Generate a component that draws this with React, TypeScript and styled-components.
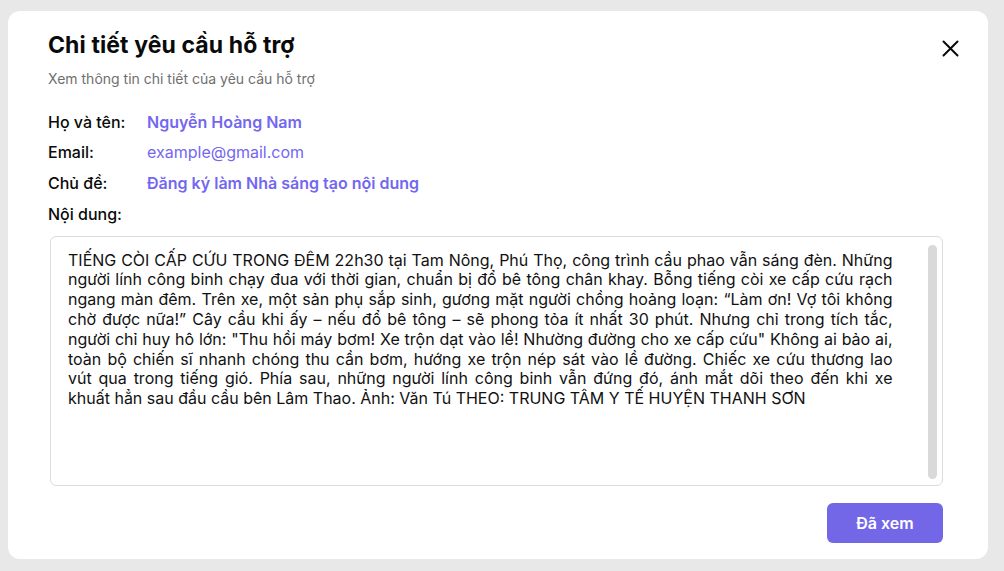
import React from "react";
import styled, { createGlobalStyle } from "styled-components";

const GlobalStyle = createGlobalStyle`
  html, body { margin: 0; padding: 0; }
  body {
    background: #e8e8e8;
    font-family: Inter, "Noto Sans", "Liberation Sans", sans-serif;
    color: #111111;
  }
  * { box-sizing: border-box; }
`;

const Page = styled.div`
  width: 1004px;
  height: 571px;
  padding: 11px 16px 12px 8px;
  display: flex;
`;

const Modal = styled.div`
  flex: 1;
  background: #ffffff;
  border-radius: 12px;
  padding: 18px 45px 16px 40px;
  display: flex;
  flex-direction: column;
`;

const Header = styled.div`
  display: flex;
  align-items: flex-start;
  justify-content: space-between;
`;

const HeaderText = styled.div`
  display: flex;
  flex-direction: column;
  gap: 8px;
`;

const Title = styled.h2`
  margin: 0;
  font-size: 23px;
  line-height: 32px;
  font-weight: 700;
  letter-spacing: 0.1px;
  color: #0a0a0a;
`;

const Subtitle = styled.p`
  margin: 0;
  font-size: 14px;
  line-height: 20px;
  color: #6f6f6f;
`;

const CloseButton = styled.button`
  margin: 11px -16px 0 0;
  padding: 0;
  width: 17px;
  height: 17px;
  border: none;
  background: transparent;
  display: flex;
  align-items: center;
  justify-content: center;
  cursor: pointer;
  color: #0a0a0a;
`;

const InfoGrid = styled.div`
  margin-top: 22.8px;
  display: grid;
  grid-template-columns: 99px 1fr;
  row-gap: 10.7px;
  font-size: 16px;
  line-height: 20px;
`;

const Label = styled.div`
  font-weight: 500;
  color: #0a0a0a;
`;

const Value = styled.div<{ $strong?: boolean }>`
  color: #7367f0;
  font-weight: ${(p) => (p.$strong ? 600 : 400)};
`;

const ContentBox = styled.div`
  margin: 12.4px 0 0 2px;
  height: 250px;
  border: 1px solid #dcdcdc;
  border-radius: 6px;
  display: flex;
  overflow: hidden;
`;

const ContentText = styled.div`
  flex: 1;
  padding: 13.3px 35.5px 0 17px;
  font-size: 16px;
  line-height: 19.8px;
  color: #111111;
`;

const Line = styled.span<{ $last?: boolean }>`
  display: block;
  white-space: nowrap;
  text-align: ${(p) => (p.$last ? "left" : "justify")};
  text-align-last: ${(p) => (p.$last ? "left" : "justify")};
`;

const ScrollThumb = styled.div`
  width: 9px;
  margin: 8px 5px 6px 0;
  border-radius: 5px;
  background: #d9d9d9;
`;

const Footer = styled.div`
  margin-top: 16.5px;
  display: flex;
  justify-content: flex-end;
`;

const PrimaryButton = styled.button`
  width: 116px;
  height: 40px;
  border: none;
  border-radius: 6px;
  background: #7367e8;
  color: #ffffff;
  font-family: Inter, "Noto Sans", "Liberation Sans", sans-serif;
  font-size: 16px;
  font-weight: 600;
  cursor: pointer;
`;

const lines = [
  "TIẾNG CÒI CẤP CỨU TRONG ĐÊM 22h30 tại Tam Nông, Phú Thọ, công trình cầu phao vẫn sáng đèn. Những",
  "người lính công binh chạy đua với thời gian, chuẩn bị đổ bê tông chân khay. Bỗng tiếng còi xe cấp cứu rạch",
  "ngang màn đêm. Trên xe, một sản phụ sắp sinh, gương mặt người chồng hoảng loạn: “Làm ơn! Vợ tôi không",
  "chờ được nữa!” Cây cầu khi ấy – nếu đổ bê tông – sẽ phong tỏa ít nhất 30 phút. Nhưng chỉ trong tích tắc,",
  "người chỉ huy hô lớn: \"Thu hồi máy bơm! Xe trộn dạt vào lề! Nhường đường cho xe cấp cứu\" Không ai bảo ai,",
  "toàn bộ chiến sĩ nhanh chóng thu cần bơm, hướng xe trộn nép sát vào lề đường. Chiếc xe cứu thương lao",
  "vút qua trong tiếng gió. Phía sau, những người lính công binh vẫn đứng đó, ánh mắt dõi theo đến khi xe",
  "khuất hẳn sau đầu cầu bên Lâm Thao. Ảnh: Văn Tú THEO: TRUNG TÂM Y TẾ HUYỆN THANH SƠN",
];

export default function App() {
  return (
    <>
      <GlobalStyle />
      <Page>
        <Modal>
          <Header>
            <HeaderText>
              <Title>Chi tiết yêu cầu hỗ trợ</Title>
              <Subtitle>Xem thông tin chi tiết của yêu cầu hỗ trợ</Subtitle>
            </HeaderText>
            <CloseButton aria-label="Đóng">
              <svg width="17" height="17" viewBox="0 0 17 17" fill="none">
                <path
                  d="M1.5 1.5 15.5 15.5M15.5 1.5 1.5 15.5"
                  stroke="currentColor"
                  strokeWidth="2"
                  strokeLinecap="round"
                />
              </svg>
            </CloseButton>
          </Header>
          <InfoGrid>
            <Label>Họ và tên:</Label>
            <Value $strong>Nguyễn Hoàng Nam</Value>
            <Label>Email:</Label>
            <Value>example@gmail.com</Value>
            <Label>Chủ đề:</Label>
            <Value $strong>Đăng ký làm Nhà sáng tạo nội dung</Value>
            <Label>Nội dung:</Label>
            <div />
          </InfoGrid>
          <ContentBox>
            <ContentText>
              {lines.map((l, i) => (
                <Line key={i} $last={i === lines.length - 1}>
                  {l}
                </Line>
              ))}
            </ContentText>
            <ScrollThumb />
          </ContentBox>
          <Footer>
            <PrimaryButton>Đã xem</PrimaryButton>
          </Footer>
        </Modal>
      </Page>
    </>
  );
}
